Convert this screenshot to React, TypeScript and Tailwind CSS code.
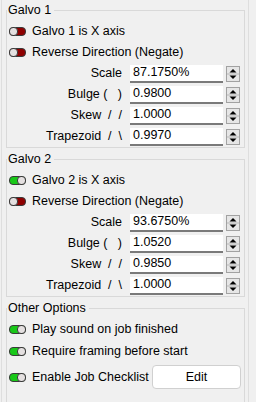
import React from "react";

function Toggle({ on }: { on: boolean }) {
  return (
    <svg width="17" height="9" viewBox="0 0 17 9" className="shrink-0">
      <rect x="0.5" y="0.5" width="16" height="8" rx="3.5" fill={on ? "#18c818" : "#8e0000"} stroke="#3a3a3a" />
      <rect x={on ? 8.5 : 0.5} y="0.5" width="8" height="8" rx="3.5" fill="#e4e0e0" stroke="#3a3a3a" />
    </svg>
  );
}

function Spinner() {
  return (
    <svg width="14" height="16" viewBox="0 0 14 16" className="ml-[3px] shrink-0">
      <rect x="0.5" y="0.5" width="13" height="15" fill="#e6e6e6" stroke="#a2a2a2" />
      <line x1="1" y1="8" x2="13" y2="8" stroke="#b8b8b8" />
      <polygon points="3.5,6.5 7,3 10.5,6.5" fill="#000" />
      <polygon points="3.5,9.5 10.5,9.5 7,13" fill="#000" />
    </svg>
  );
}

function CheckRow({ on, label, children }: { on: boolean; label: string; children?: React.ReactNode }) {
  return (
    <div className="flex h-[21px] items-center">
      <Toggle on={on} />
      <span className="ml-[6px]">{label}</span>
      {children}
    </div>
  );
}

function NumRow({ label, value }: { label: string; value: string }) {
  return (
    <div className="flex h-[21px] items-center">
      <span className="w-[113px] whitespace-pre text-right">{label}</span>
      <div className="ml-[8px] flex h-[18px] w-[93px] items-center border-b-2 border-[#7a7a7a] bg-white pl-[3px]">
        {value}
      </div>
      <Spinner />
    </div>
  );
}

function Group({ title, className, children }: { title: string; className?: string; children: React.ReactNode }) {
  return (
    <fieldset className={`border border-[#d9d9d9] ${className ?? ""}`}>
      <legend className="pl-[1px] pr-[3px] leading-[16px]">{title}</legend>
      <div className="pl-[2px] pr-[3px] pt-[3px]">{children}</div>
    </fieldset>
  );
}

export default function App() {
  const galvo = [
    { label: "Scale", a: "87.1750%", b: "93.6750%" },
    { label: "Bulge (   )", a: "0.9800", b: "1.0520" },
    { label: "Skew  /  /", a: "1.0000", b: "0.9850" },
    { label: "Trapezoid  /  \\", a: "0.9970", b: "1.0000" },
  ];

  return (
    <div
      className="h-[402px] w-[256px] overflow-hidden bg-[#f0f0f0] pl-[1px] text-[12.5px] text-black"
      style={{ fontFamily: '"Liberation Sans", Arial, sans-serif' }}
    >
      <div className="h-full w-[248px] border-l border-r border-[#dedede] pl-[4px] pr-[3px] pt-[2px]">
        <Group title="Galvo 1">
          <CheckRow on={false} label="Galvo 1 is X axis" />
          <CheckRow on={false} label="Reverse Direction (Negate)" />
          {galvo.map((g) => (
            <NumRow key={g.label} label={g.label} value={g.a} />
          ))}
        </Group>

        <Group title="Galvo 2" className="mt-[3px]">
          <CheckRow on label="Galvo 2 is X axis" />
          <CheckRow on={false} label="Reverse Direction (Negate)" />
          {galvo.map((g) => (
            <NumRow key={g.label} label={g.label} value={g.b} />
          ))}
        </Group>

        <Group title="Other Options" className="mt-[3px] h-[130px]">
          <CheckRow on label="Play sound on job finished" />
          <div className="flex h-[23px] items-center">
            <Toggle on />
            <span className="ml-[6px]">Require framing before start</span>
          </div>
          <div className="flex h-[28px] items-center">
            <Toggle on />
            <span className="ml-[6px]">Enable Job Checklist</span>
            <button className="ml-auto h-[24px] w-[89px] rounded-[4px] border border-[#d0d0d0] bg-white">
              Edit
            </button>
          </div>
        </Group>
      </div>
    </div>
  );
}
